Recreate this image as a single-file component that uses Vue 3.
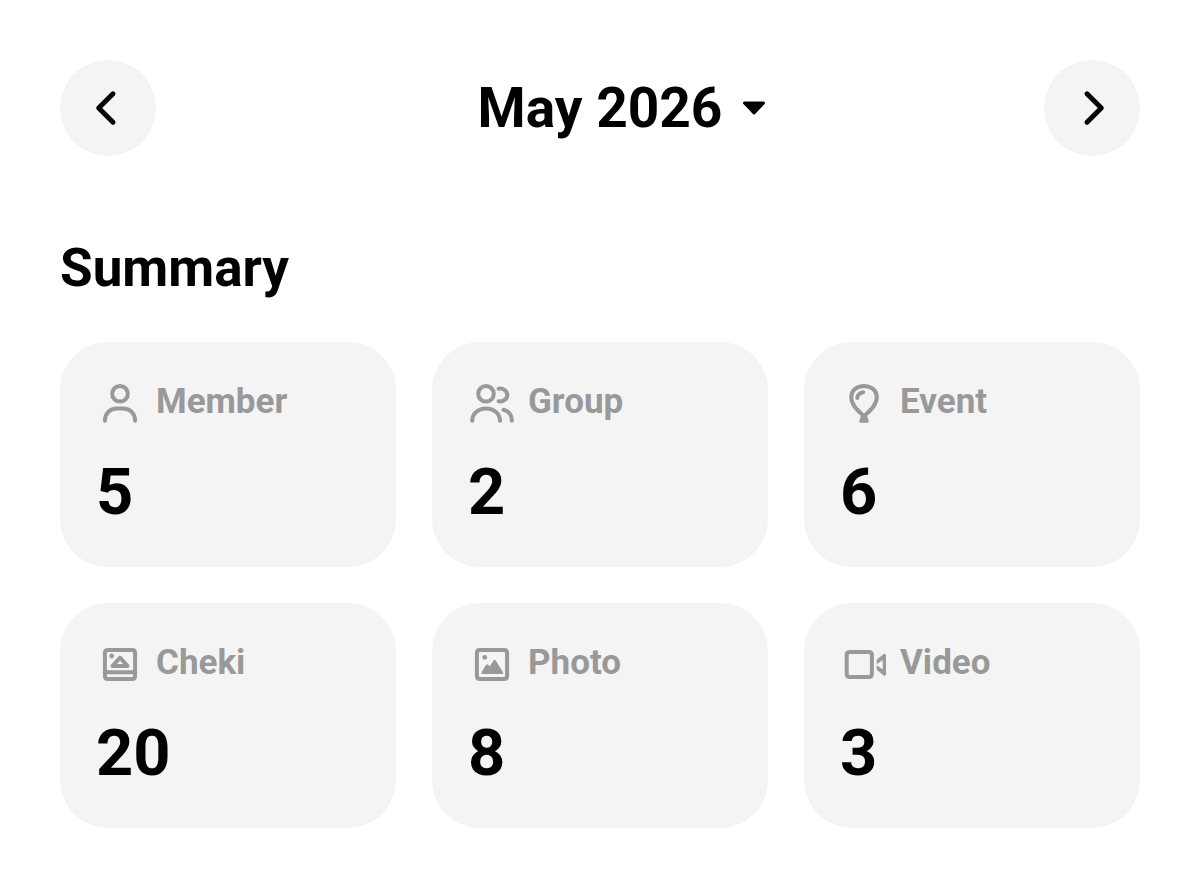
<template>
  <main class="report">
    <header class="month-nav">
      <button type="button" class="month-nav__arrow" aria-label="Previous month" @click="move(-1)">
        <svg viewBox="0 0 48 48" class="icon icon--arrow" aria-hidden="true">
          <path d="M29 9.8L14.700 24L29 38.200" />
        </svg>
      </button>
      <button type="button" class="month-nav__title">
        {{ title }}
        <svg viewBox="0 0 24 16" class="month-nav__caret" aria-hidden="true">
          <path d="M2.500 3h19L12 13z" />
        </svg>
      </button>
      <button type="button" class="month-nav__arrow" aria-label="Next month" @click="move(1)">
        <svg viewBox="0 0 48 48" class="icon icon--arrow" aria-hidden="true">
          <path d="M19 9.800L33.300 24L19 38.200" />
        </svg>
      </button>
    </header>

    <section class="summary">
      <h2 class="summary__title">Summary</h2>
      <ul class="summary__grid">
        <li v-for="item in items" :key="item.label" class="card">
          <div class="card__head">
            <svg viewBox="0 0 48 48" class="icon" aria-hidden="true">
              <path v-for="d in item.lines" :key="d" :d="d" />
              <path v-for="d in item.fills" :key="d" :d="d" class="icon__fill" />
            </svg>
            <span class="card__label">{{ item.label }}</span>
          </div>
          <p class="card__value">{{ item.value }}</p>
        </li>
      </ul>
    </section>
  </main>
</template>

<script setup>
import { computed, ref } from 'vue'

const current = ref(new Date(2026, 4, 1))

const title = computed(() =>
  current.value.toLocaleDateString('en-US', { month: 'long', year: 'numeric' })
)

const move = (step) => {
  current.value = new Date(current.value.getFullYear(), current.value.getMonth() + step, 1)
}

const items = [
  {
    label: 'Member',
    value: 5,
    lines: [
      'M16.200 15.800a7.800 7.800 0 1 0 15.600 0a7.800 7.800 0 1 0-15.600 0',
      'M8.900 42.800c0-7 5-12.400 12-12.400h6.200c7 0 12 5.400 12 12.400',
    ],
  },
  {
    label: 'Group',
    value: 2,
    lines: [
      'M10.200 15.800a7.800 7.800 0 1 0 15.600 0a7.800 7.800 0 1 0-15.600 0',
      'M4.200 42.800c0-7 6-12.400 13.900-12.400S32 35.800 32 42.800',
      'M30.600 10.700c4.700-.7 8.700 2.300 8.700 6.300s-4 7-8.700 6.300',
      'M35.500 31.700c5 1.200 8.400 5.300 8.400 11.100',
    ],
  },
  {
    label: 'Event',
    value: 6,
    lines: [
      'M24 38.300C19 33.300 11.200 27.500 11.200 19C11.200 12.500 16.800 7.900 24 7.900S36.800 12.500 36.800 19C36.800 27.500 29 33.300 24 38.300z',
      'M17.300 20c.2-3.200 2.800-5.500 6-5.800',
    ],
    fills: ['M21 37.500h6l1.800 5.500q.3 1.800-1.300 1.800h-7q-1.600 0-1.300-1.800z'],
  },
  {
    label: 'Cheki',
    value: 20,
    lines: [
      'M12 10.900h24q3.100 0 3.100 3.100v23q0 3.100-3.100 3.100H12q-3.100 0-3.100-3.100V14q0-3.100 3.100-3.100z',
      'M9 33.300h30',
      'M16.500 27L24 18.700l7.500 8.300z',
    ],
    fills: ['M13.300 17a2.400 2.400 0 1 0 4.800 0a2.400 2.400 0 1 0-4.800 0'],
  },
  {
    label: 'Photo',
    value: 8,
    lines: [
      'M12 10.900h24q3.100 0 3.100 3.100v23q0 3.100-3.100 3.100H12q-3.100 0-3.100-3.100V14q0-3.100 3.100-3.100z',
    ],
    fills: [
      'M14.300 18.300a2.400 2.400 0 1 0 4.800 0a2.400 2.400 0 1 0-4.800 0',
      'M14.500 35q-1.800 0-1-1.700l4.500-7.200q1.200-1.800 2.500 0l1.200 1.500 3.700-5.900q1.300-1.800 2.500 0l7.200 11.600q.8 1.700-1 1.700z',
    ],
  },
  {
    label: 'Video',
    value: 3,
    lines: [
      'M9.800 13h19q3.100 0 3.100 3.100V35q0 3.100-3.100 3.100h-19q-3.100 0-3.100-3.100V16.100q0-3.100 3.100-3.100z',
    ],
    fills: [
      'M36.700 20.700l7-5.700q2.300-1 2.300 1.500v18.400q0 2.500-2.300 1.500l-7-5.700v-4.500l6 4.200V21l-6 4.200z',
    ],
  },
]
</script>

<style>
body {
  margin: 0;
  background: #fff;
}
</style>

<style scoped>
.report {
  padding: 60px;
  color: #000;
  font-family: Roboto, "Noto Sans", sans-serif;
  font-weight: 700;
}

.month-nav {
  display: flex;
  align-items: center;
  justify-content: space-between;
}

button {
  padding: 0;
  border: 0;
  color: inherit;
  font: inherit;
  cursor: pointer;
}

.month-nav__arrow {
  display: flex;
  align-items: center;
  justify-content: center;
  width: 96px;
  height: 96px;
  border-radius: 50%;
  background: #f4f4f4;
}

.month-nav__title {
  display: flex;
  align-items: center;
  gap: 20px;
  background: none;
  font-size: 55px;
  line-height: 72px;
}

/* the caret hangs outside so the month itself stays centred */
.month-nav__caret {
  width: 24px;
  height: 16px;
  margin-right: -44px;
  fill: currentColor;
  stroke: currentColor;
  stroke-width: 3;
  stroke-linejoin: round;
}

.icon {
  flex: none;
  width: 48px;
  height: 48px;
  fill: none;
  stroke: currentColor;
  stroke-width: 4;
  stroke-linecap: round;
  stroke-linejoin: round;
}

.icon--arrow {
  stroke-width: 5;
}

.icon__fill {
  fill: currentColor;
  stroke: none;
}

.summary {
  margin-top: 76px;
}

.summary__title {
  margin: 0;
  font-size: 53px;
  line-height: 72px;
}

.summary__grid {
  display: grid;
  grid-template-columns: repeat(3, 1fr);
  gap: 36px;
  margin: 38px 0 0;
  padding: 0;
  list-style: none;
}

.card {
  padding: 36px;
  border-radius: 48px;
  background: #f4f4f4;
}

.card__head {
  display: flex;
  align-items: center;
  gap: 12px;
  color: #999;
}

.card__label {
  font-size: 35px;
  line-height: 48px;
}

.card__value {
  margin: 27px 0 0;
  font-size: 65px;
  line-height: 78px;
}
</style>
